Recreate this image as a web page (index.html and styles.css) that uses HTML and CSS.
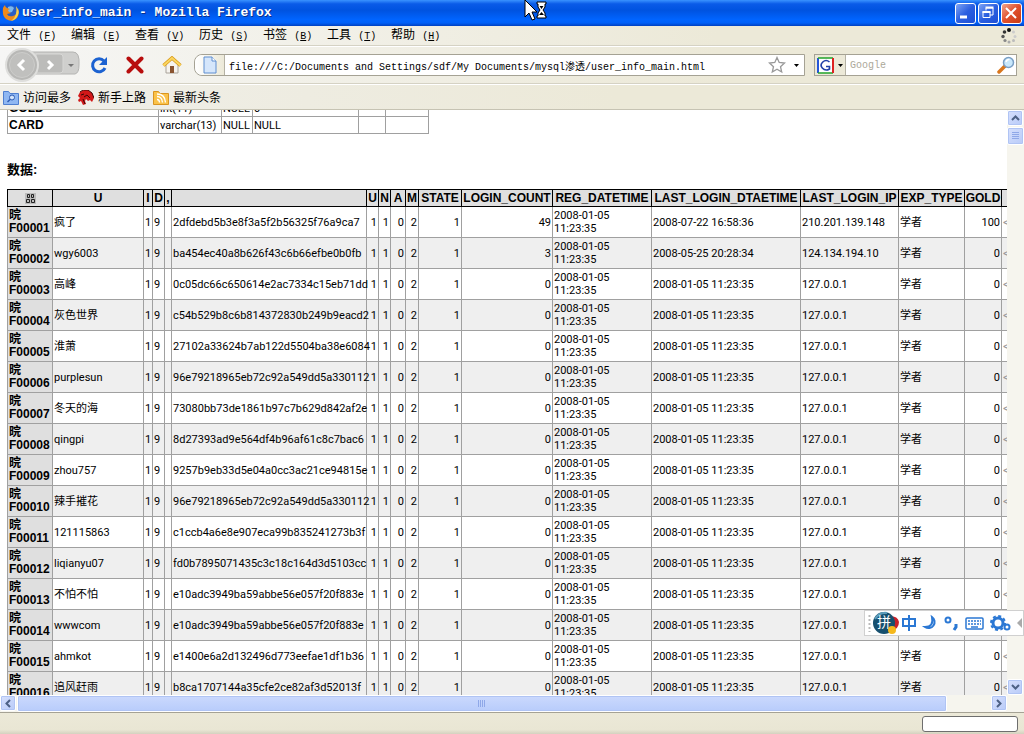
FILE: index.html
```html
<!DOCTYPE html>
<html lang="zh-CN">
	<head>
		<meta charset="UTF-8">
		<title>user_info_main - Mozilla Firefox</title>
		<link rel="stylesheet" href="styles.css">
	</head>
	<body>
		<header class="titlebar">
			<svg class="logo" width="18" height="18" viewBox="0 0 18 18">
				<circle cx="9" cy="8.500" r="7" fill="#2a5fc4"/>
				<path d="M6 3q4-2 6 1l-2 4-4 1z" fill="#7ab8f0"/>
				<path d="M1 4q-1 8 3 11 6 4 11-1 3-4 1-10-1 7-5 8-5 1-6-2l4-1q-3-1-3-3l2-1-3-1q-2-1-2-3-1 1-2 3z" fill="#ef8a1b"/>
				<path d="M14 2q4 5 2 9-2 5-7 6 4-3 5-7 1-4 0-8z" fill="#f9d34b"/>
			</svg>
			<h1>user_info_main - Mozilla Firefox</h1>
			<div class="win-btns">
				<button class="win-btn" aria-label="最小化"><svg width="18" height="18"><path d="M4 13h7" stroke="#fff" stroke-width="3"/></svg></button>
				<button class="win-btn" aria-label="还原"><svg width="18" height="18" fill="none" stroke="#fff"><path d="M7 6.500V4h7v7h-3"/><path d="M6.500 3.500h8" stroke-width="2"/><path d="M4 7.500h7v6H4z"/><path d="M3.500 8h8" stroke-width="2"/></svg></button>
				<button class="win-btn close" aria-label="关闭"><svg width="18" height="18"><path d="M4 4l10 10M14 4L4 14" stroke="#fff" stroke-width="2"/></svg></button>
			</div>
			<svg class="cursor" width="24" height="22" viewBox="0 0 24 22">
				<path d="M1 0v17l4-4 3 7 3-1-3-7h5z" fill="#fff" stroke="#000"/>
				<path d="M13 2h9v2h-1v3l-2 3 2 3v3h1v2h-9v-2h1v-3l2-3-2-3V4h-1z" fill="#fff" stroke="#000"/>
				<path d="M15.500 6h4l-2 3zM15 15l2.500-3 2.500 3z" fill="#000"/>
			</svg>
		</header>

		<nav class="menubar">
			<a href="#">文件 <small>(<u>F</u>)</small></a>
			<a href="#">编辑 <small>(<u>E</u>)</small></a>
			<a href="#">查看 <small>(<u>V</u>)</small></a>
			<a href="#">历史 <small>(<u>S</u>)</small></a>
			<a href="#">书签 <small>(<u>B</u>)</small></a>
			<a href="#">工具 <small>(<u>T</u>)</small></a>
			<a href="#">帮助 <small>(<u>H</u>)</small></a>
			<svg class="throbber" width="16" height="16" viewBox="0 0 16 16">
				<circle cx="8" cy="2" r="2" fill="#111"/><circle cx="3.500" cy="4" r="1.800" fill="#333"/>
				<circle cx="2" cy="8.500" r="1.700" fill="#555"/><circle cx="4" cy="12.500" r="1.600" fill="#888"/>
				<circle cx="8" cy="14" r="1.500" fill="#aaa"/><circle cx="12.500" cy="12.500" r="1.500" fill="#bbb"/>
				<circle cx="14" cy="8.500" r="1.500" fill="#ccc"/><circle cx="12.500" cy="4" r="1.500" fill="#ccc"/>
			</svg>
		</nav>

		<div class="toolbar">
			<button class="tool history" aria-label="后退 前进">
				<svg width="80" height="34" viewBox="0 0 80 34">
					<path d="M12 4h61q7 0 6 13 0 8-4 9H12z" fill="#cfcfcd" stroke="#b4b4b2"/>
					<path d="M36 6h24q3 0 3 3v13q0 3-3 3H36z" fill="#bcbcba" stroke="#d8d8d6"/>
					<circle cx="22" cy="17" r="16" fill="#b8b8b6" stroke="#dededc" stroke-width="2"/>
					<circle cx="22" cy="17" r="12.500" fill="#c0c0be" stroke="#cdcdcb"/>
					<path d="M24 12l-5 5 5 5M48 13l4 4-4 4" fill="none" stroke="#fff" stroke-width="3"/>
					<path d="M68 16h6l-3 3z" fill="#777"/>
				</svg>
			</button>
			<button class="tool" aria-label="刷新">
				<svg width="18" height="18" viewBox="0 0 18 18"><path d="M14 5a6.500 6.500 0 1 0 1 7" fill="none" stroke="#1c62d1" stroke-width="3"/><path d="M17 1v8H9z" fill="#1c62d1"/></svg>
			</button>
			<button class="tool" aria-label="停止">
				<svg width="18" height="18" viewBox="0 0 18 18"><path d="M2.500 2.500l13 13M15.500 2.500l-13 13" stroke="#b80d0d" stroke-width="4" stroke-linecap="round"/></svg>
			</button>
			<button class="tool" aria-label="主页">
				<svg width="20" height="18" viewBox="0 0 20 18"><path d="M4 8v9h12V8l-6-5z" fill="#f6f3ee" stroke="#a9a39a"/><path d="M1.500 9.500L10 2l8.500 7.500" fill="none" stroke="#d99b1c" stroke-width="3.500"/><path d="M1.500 9.500L10 2l8.500 7.500" fill="none" stroke="#fbd660" stroke-width="2"/><path d="M8 10h4v7H8z" fill="#8a5430"/></svg>
			</button>
			<form class="address">
				<span class="page-icon">
					<svg width="14" height="18" viewBox="0 0 14 18"><path d="M1 1h8l4 4v12H1z" fill="#d5e6fb" stroke="#5f8ed0"/><path d="M9 1v4h4" fill="#fff" stroke="#5f8ed0"/></svg>
				</span>
				<input type="text" aria-label="地址" value="file:///C:/Documents and Settings/sdf/My Documents/mysql渗透/user_info_main.html">
				<svg width="18" height="18" viewBox="0 0 18 18"><path d="M9 1.500l2.200 5 5.300.500-4 3.700 1.200 5.300L9 13.200 4.300 16l1.200-5.300-4-3.700 5.300-.500z" fill="#fff" stroke="#999" stroke-width="1.300"/></svg>
				<svg class="arrow" width="5" height="3"><path d="M0 0h5L2.500 3z"/></svg>
			</form>
			<form class="search">
				<span class="engine">
					<svg width="17" height="17" viewBox="0 0 17 17"><path fill="#fff" d="M1 1h15v15H1z"/><path d="M1 16V1" stroke="#2656d8" stroke-width="2"/><path d="M1 1h15M1 16h15" stroke="#22a32a" stroke-width="1.500"/><path d="M16 1v15" stroke="#d22" stroke-width="2"/><path d="M12.500 5Q9 2 5.800 5t-.500 6q3 3.500 7.200 1V9.500H9" fill="none" stroke="#2140a8" stroke-width="1.600"/></svg>
					<svg width="5" height="3"><path d="M0 0h5L2.500 3z"/></svg>
				</span>
				<input type="text" aria-label="搜索" placeholder="Google">
				<svg width="18" height="18" viewBox="0 0 18 18"><path d="M2 16l6-6" stroke="#d9761c" stroke-width="3.500" stroke-linecap="round"/><circle cx="11.500" cy="6.500" r="5" fill="#c9e8fb" stroke="#7a9fc4" stroke-width="1.500"/><path d="M9 6q1-3 3.500-2.500" fill="none" stroke="#fff" stroke-width="1.500"/></svg>
			</form>
		</div>

		<nav class="bookmarks">
			<a href="#">
				<svg width="16" height="15" viewBox="0 0 16 15"><path d="M.500 1.500h5l1.500 2h8.500v11H.500z" fill="#8fb7f2" stroke="#4f7fd0"/><circle cx="9" cy="7.500" r="2.500" fill="#d4e5fc" stroke="#2d5cb4"/><path d="M7 9.500L4.500 12" stroke="#2d5cb4" stroke-width="1.500"/></svg>
				访问最多
			</a>
			<a href="#">
				<svg width="16" height="15" viewBox="0 0 16 15"><path d="M0 6l2-4 4-2h4l4 3 2 5-2 4-2-2-2 1-2-2-1 2 1 3-3 1-2-4-2 1-1-2 2-2z" fill="#d11818"/><path d="M2 2l3-2 5 0 4 3 2 5M3 5l3-1M6 7l3-2 3 3M5 9l2 5" fill="none" stroke="#3a0505"/></svg>
				新手上路
			</a>
			<a href="#">
				<svg width="16" height="15" viewBox="0 0 16 15"><path d="M.500 1.500h5l1.500 2h8.500v11H.500z" fill="#fac24a" stroke="#d99420"/><path d="M4 6.500q5 0 5.500 6M4 9.500q2.500 0 2.500 3M4 4q8 0 8.500 8.500" fill="none" stroke="#fff" stroke-width="1.300"/></svg>
				最新头条
			</a>
		</nav>

		<main class="browser">
			<div class="page">
				<table class="grid struct">
					<colgroup><col class="s-name"><col class="s-type"><col class="s-null"><col class="s-def"><col class="s-a"><col class="s-b"></colgroup>
					<tr><th>GOLD</th><td>int(11)</td><td>NULL</td><td>0</td><td></td><td></td></tr>
					<tr><th>CARD</th><td>varchar(13)</td><td>NULL</td><td>NULL</td><td></td><td></td></tr>
				</table>
				<h2>数据:</h2>
				<table class="grid data">
					<colgroup>
						<col class="w45"><col class="w91"><col class="w9"><col class="w12"><col class="w7"><col class="w195">
						<col class="w12"><col class="w12"><col class="w15"><col class="w13"><col class="w43"><col class="w91">
						<col class="w99"><col class="w149"><col class="w98"><col class="w66"><col class="w37"><col class="w45">
					</colgroup>
					<thead>
						<tr>
							<th><svg width="11" height="11" viewBox="0 0 11 11"><path fill="#bbb" d="M0 0h11v11H0z"/><path d="M2.500 1.500h2v3h-2zM6.500 1.500h2v3h-2zM1.500 6.500h3v3h-3zM6.500 6.500h3v3h-3z" fill="none" stroke="#222"/></svg></th>
							<th>U</th><th>I</th><th>D</th><th>,</th><th></th><th>U</th><th>N</th><th>A</th><th>M</th>
							<th>STATE</th><th>LOGIN_COUNT</th><th>REG_DATETIME</th><th>LAST_LOGIN_DTAETIME</th>
							<th>LAST_LOGIN_IP</th><th>EXP_TYPE</th><th>GOLD</th><th></th>
						</tr>
					</thead>
					<tbody id="rows"></tbody>
				</table>
			</div>
			<div class="vscroll">
				<button class="sb" aria-label="向上"><svg width="9" height="6"><path d="M1 5l3.500-3.500L8 5" fill="none" stroke="#4d6185" stroke-width="2"/></svg></button>
				<div class="thumb"><svg width="7" height="8"><path d="M0 .500h7M0 2.500h7M0 4.500h7M0 6.500h7" stroke="#8fa8e8"/></svg></div>
				<button class="sb down" aria-label="向下"><svg width="9" height="6"><path d="M1 1l3.500 3.500L8 1" fill="none" stroke="#4d6185" stroke-width="2"/></svg></button>
			</div>
		</main>
		<div class="hscroll">
			<button class="sb" aria-label="向左"><svg width="6" height="9"><path d="M5 1L1.500 4.500 5 8" fill="none" stroke="#4d6185" stroke-width="2"/></svg></button>
			<div class="thumb"><svg width="8" height="7"><path d="M.500 0v7M2.500 0v7M4.500 0v7M6.500 0v7" stroke="#8fa8e8"/></svg></div>
			<button class="sb" aria-label="向右"><svg width="6" height="9"><path d="M1 1l3.500 3.500L1 8" fill="none" stroke="#4d6185" stroke-width="2"/></svg></button>
		</div>
		<footer class="status"><div class="progress"></div></footer>

		<div class="ime">
			<svg width="158" height="26" viewBox="0 0 158 26">
				<path d="M4.500 5v17" stroke="#bbb" stroke-width="2" stroke-dasharray="2 2"/>
				<path d="M22 6q11-1 12 6 0 7-8 9z" fill="#c8202a"/>
				<circle cx="19" cy="13" r="11" fill="#16506f"/><path d="M10 9q4-7 12-6" fill="none" stroke="#5c9cba" stroke-width="2"/>
				<circle cx="27" cy="20" r="4" fill="#f5b81c"/>
				<g fill="none" stroke="#2b78d4" stroke-width="2">
					<path d="M38 9h12v7H38zM44 5v16"/>
					<path d="M67 7a6 6 0 1 1-7 10q9 0 7-10z"/>
					<circle cx="83" cy="10" r="2.500"/><path d="M91 14v3l-2 3" stroke-width="3"/>
					<rect x="101" y="8" width="17" height="11" rx="1" stroke-width="1.500"/>
					<path d="M103 11h13M103 14h13" stroke-width="1.500" stroke-dasharray="2 1"/><path d="M106 17h7" stroke-width="1.500"/>
					<circle cx="133" cy="13" r="5" stroke-width="3"/><circle cx="133" cy="13" r="7" stroke-dasharray="3 2.500"/>
					<circle cx="142" cy="17" r="2.500"/>
				</g>
				<path d="M157 8v10l-5-5z" fill="#aaa"/>
			</svg>
			<span class="ime-char">拼</span>
		</div>

		<script src="script.js"></script>
	</body>
</html>
```
FILE: styles.css
```css
*{
	margin: 0;
	padding: 0;
	box-sizing: border-box;
}
body{
	height: 100vh;
	display: flex;
	flex-direction: column;
	overflow: hidden;
	position: relative;
	background: #ece9d8;
	color: #000;
	font-family: "Liberation Mono","Noto Sans CJK SC",monospace;
	font-size: 12px;
}
button,input{
	border: none;
	background: none;
	font: inherit;
}
a{
	color: #000;
	text-decoration: none;
}
svg{
	display: block;
	flex: none;
}
/* 标题栏 */
.titlebar{
	height: 26px;
	flex: none;
	display: flex;
	align-items: center;
	padding: 0 2px;
	gap: 2px;
	position: relative;
	background: linear-gradient(#3a93ff,#0a5be8 15%,#0053e0 40%,#0064ff 75%,#0060f8 88%,#0040c0);
}
.titlebar h1{
	flex: 1;
	color: #fff;
	font-size: 13px;
	line-height: 26px;
	text-shadow: 1px 1px #0a2f8a;
}
.win-btns{
	display: flex;
	gap: 2px;
}
.win-btn{
	width: 21px;
	height: 21px;
	border: 1px solid #fff;
	border-radius: 3px;
	background: linear-gradient(135deg,#7ea4f5,#2b5fe0 50%,#1d4fd6);
}
.close{
	background: linear-gradient(135deg,#f0a48c,#e0502c 50%,#c83c14);
}
.cursor{
	position: absolute;
	left: 524px;
	top: 0;
}
/* 菜单栏 */
.menubar{
	height: 20px;
	flex: none;
	display: flex;
	align-items: center;
	gap: 16px;
	padding: 1px 7px 0;
	background: linear-gradient(90deg,#f6f6f5,#ece9d8 70%);
	border-bottom: 1px solid #d5d2c4;
}
.menubar a{
	width: 48px;
	white-space: nowrap;
	line-height: 18px;
}
.menubar small{
	font-size: 10px;
}
.throbber{
	margin-left: auto;
}
/* 工具栏 */
.toolbar{
	height: 38px;
	flex: none;
	display: flex;
	align-items: center;
	padding: 0 7px 0 0;
	gap: 18px;
	background: linear-gradient(90deg,#f6f6f5,#ece9d8 70%);
	border-top: 1px solid #fff;
	border-bottom: 1px solid #d5d2c4;
}
.history{
	margin-right: -8px;
}
.address,.search{
	height: 22px;
	display: flex;
	align-items: center;
	background: #fff;
	border: 1px solid #a5a294;
}
.address{
	flex: 1;
	gap: 8px;
	padding-right: 5px;
	margin-left: -6px;
	border-radius: 8px 0 0 8px;
}
.address input,.search input{
	flex: 1;
	min-width: 0;
	font-size: 10px;
	height: 18px;
	outline: none;
}
.page-icon{
	width: 30px;
	height: 20px;
	display: flex;
	align-items: center;
	justify-content: center;
	border-right: 1px solid #b5b2a4;
	border-radius: 8px 0 0 8px;
	background: linear-gradient(90deg,#fff,#ece9d8);
}
.address input{
	margin-left: -4px;
}
.search{
	width: 203px;
	padding-right: 1px;
	margin-left: -9px;
}
.engine{
	height: 20px;
	width: 31px;
	display: flex;
	align-items: center;
	justify-content: center;
	gap: 4px;
	background: #ece9d8;
	border-right: 1px solid #b5b2a4;
}
.search input{
	padding-left: 4px;
}
.search input::placeholder{
	color: #aca899;
}
/* 书签栏 */
.bookmarks{
	height: 26px;
	flex: none;
	display: flex;
	align-items: center;
	gap: 7px;
	padding: 0 3px;
	background: linear-gradient(90deg,#f0efea,#ece9d8 60%);
	border-top: 1px solid #fff;
	border-bottom: 1px solid #c6c3b3;
}
.bookmarks a{
	display: flex;
	align-items: center;
	gap: 4px;
}
/* 页面 */
.browser{
	flex: 1;
	min-height: 0;
	display: flex;
}
.page{
	flex: 1;
	min-width: 0;
	overflow: hidden;
	background: #fff;
	padding-left: 7px;
	font-family: "Liberation Sans","Noto Sans CJK SC",sans-serif;
	line-height: 13px;
}
.grid{
	border-collapse: collapse;
	table-layout: fixed;
}
.grid th,.grid td{
	border: 1px solid #a0a0a0;
	padding: 1px;
	white-space: nowrap;
	text-align: left;
	font-size: 12px;
}
.grid td{
	font-family: Roboto,"Noto Sans CJK SC",sans-serif;
	font-size: 11px;
}
.struct{
	width: 421px;
	margin-top: -11px;
}
.struct th,.struct td{
	height: 17px;
}
.s-name{ width: 151px; }
.s-type{ width: 63px; }
.s-null{ width: 31px; }
.s-def{ width: 106px; }
.s-a{ width: 27px; }
.s-b{ width: 43px; }
.page h2{
	font-size: 13px;
	line-height: 18px;
	margin: 27px 0 10px;
}
.data{
	width: 1039px;
}
.data thead th{
	height: 17px;
	padding: 1px 0;
	text-align: center;
	background: #dfdfdf;
	border-color: #000;
}
.data thead svg{
	margin: 0 auto;
}
.data tbody th{
	background: #dfdfdf;
	white-space: normal;
}
.data tbody tr{
	height: 31px;
}
.data tbody tr:nth-child(even) td{
	background: #efefef;
}
.data .num{
	text-align: right;
}
.data .wrap{
	white-space: pre-line;
}
.data .more{
	color: #999;
}
.w7{ width: 7px; }
.w9{ width: 9px; }
.w12{ width: 12px; }
.w13{ width: 13px; }
.w15{ width: 15px; }
.w37{ width: 37px; }
.w43{ width: 43px; }
.w45{ width: 45px; }
.w66{ width: 66px; }
.w91{ width: 91px; }
.w98{ width: 98px; }
.w99{ width: 99px; }
.w149{ width: 149px; }
.w195{ width: 195px; }
/* 滚动条 */
.vscroll{
	width: 17px;
	flex: none;
	display: flex;
	flex-direction: column;
	gap: 1px;
	background: #f6f5ee;
}
.hscroll{
	height: 17px;
	flex: none;
	display: flex;
	gap: 1px;
	padding-right: 17px;
	background: #f6f5ee;
}
.sb,.thumb{
	display: flex;
	align-items: center;
	justify-content: center;
	border: 1px solid #fff;
	border-radius: 2px;
	background: linear-gradient(135deg,#d6e0fd,#b9cbf8);
	box-shadow: inset 0 0 0 1px #b0c4f4;
}
.sb{
	width: 16px;
	height: 16px;
	flex: none;
}
.down{
	margin-top: auto;
}
.vscroll .thumb{
	height: 18px;
}
.hscroll .thumb{
	flex: 1;
	height: 17px;
	margin-right: 43px;
	background: linear-gradient(#cbd9fd,#b8ccfb);
}
/* 状态栏 */
.status{
	height: 22px;
	flex: none;
	display: flex;
	justify-content: flex-end;
	align-items: center;
	padding-right: 6px;
	border-top: 1px solid #a5a294;
	background: linear-gradient(#ece9d8,#e9e6d4 80%,#d4d1bf);
}
.progress{
	width: 96px;
	height: 16px;
	border: 1px solid #6e6e6e;
	border-radius: 3px;
	background: #fff;
}
/* 输入法 */
.ime{
	position: absolute;
	right: 0;
	bottom: 98px;
	width: 160px;
	height: 26px;
	background: #fff;
	border: 1px solid #d0d0d0;
}
.ime svg{
	margin-top: -1px;
}
.ime-char{
	position: absolute;
	left: 12px;
	top: 3px;
	color: #fff;
	font-size: 14px;
	line-height: 18px;
}
```
FILE: script.js
```js
// 用户名, 密码, 登录次数, 最后登录时间, 最后登录IP, 金币
var T = "2008-01-05 11:23:35";
var L = "127.0.0.1";
var users = [
	["疯了","2dfdebd5b3e8f3a5f2b56325f76a9ca7",49,"2008-07-22 16:58:36","210.201.139.148",100],
	["wgy6003","ba454ec40a8b626f43c6b66efbe0b0fb",3,"2008-05-25 20:28:34","124.134.194.10",0],
	["高峰","0c05dc66c650614e2ac7334c15eb71dd",0,T,L,0],
	["灰色世界","c54b529b8c6b814372830b249b9eacd2",0,T,L,0],
	["淮萧","27102a33624b7ab122d5504ba38e6084",0,T,L,0],
	["purplesun","96e79218965eb72c92a549dd5a330112",0,T,L,0],
	["冬天的海","73080bb73de1861b97c7b629d842af2e",0,T,L,0],
	["qingpi","8d27393ad9e564df4b96af61c8c7bac6",0,T,L,0],
	["zhou757","9257b9eb33d5e04a0cc3ac21ce94815e",0,T,L,0],
	["辣手摧花","96e79218965eb72c92a549dd5a330112",0,T,L,0],
	["121115863","c1ccb4a6e8e907eca99b835241273b3f",0,T,L,0],
	["liqianyu07","fd0b7895071435c3c18c164d3d5103cc",0,T,L,0],
	["不怕不怕","e10adc3949ba59abbe56e057f20f883e",0,T,L,0],
	["wwwcom","e10adc3949ba59abbe56e057f20f883e",0,T,L,0],
	["ahmkot","e1400e6a2d132496d773eefae1df1b36",0,T,L,0],
	["追风赶雨","b8ca1707144a35cfe2ce82af3d52013f",0,T,L,0]
];

function num(v){
	return '<td class="num">' + v + '</td>';
}

var html = "";
for(var i=0;i<users.length;i++){
	var u = users[i];
	var id = "F000" + (i<9 ? "0" : "") + (i+1);
	html += '<tr><th>晥 ' + id + '</th><td>' + u[0] + '</td>' +
		num(1) + '<td>9</td><td></td><td>' + u[1] + '</td>' +
		num(1) + num(1) + num(0) + num(2) + num(1) + num(u[2]) +
		'<td class="wrap">' + T.replace(" ","\n") + '</td><td>' + u[3] + '</td><td>' + u[4] + '</td>' +
		'<td>学者</td>' + num(u[5]) + '<td class="more">&lt;</td></tr>';
}
document.getElementById("rows").innerHTML = html;
```
